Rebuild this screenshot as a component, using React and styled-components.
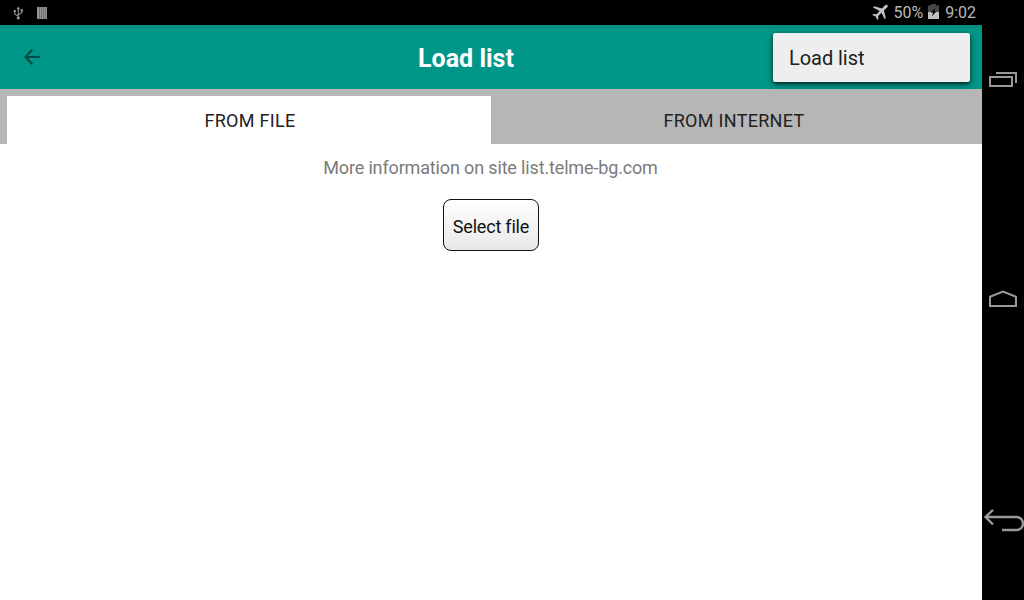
import React from 'react';
import styled, { createGlobalStyle } from 'styled-components';

const GlobalStyle = createGlobalStyle`
  * {
    box-sizing: border-box;
  }
  body {
    margin: 0;
    background: #fff;
    font-family: Roboto, sans-serif;
  }
`;

const Screen = styled.div`
  display: flex;
  width: 1024px;
  height: 600px;
  overflow: hidden;
`;

const Main = styled.div`
  display: flex;
  flex-direction: column;
  width: 982px;
  background: #fff;
`;

const StatusBar = styled.div`
  display: flex;
  align-items: center;
  justify-content: space-between;
  height: 25px;
  padding: 0 6px 0 12px;
  background: #000;
`;

const StatusGroup = styled.div`
  display: flex;
  align-items: center;
  height: 25px;
  gap: ${(props) => props.$gap}px;
`;

const StatusText = styled.span`
  color: #b8b8b8;
  font-size: 16px;
  line-height: 25px;
`;

const AppBar = styled.header`
  position: relative;
  display: flex;
  align-items: center;
  height: 64px;
  padding: 0 24px;
  background: linear-gradient(#008c7e 0, #009688 4px);
`;

const BackButton = styled.button`
  display: flex;
  width: 16px;
  padding: 0;
  border: 0;
  background: none;
`;

const Title = styled.h1`
  flex: 1;
  margin: 0 66px 0 0;
  padding-top: 3px;
  color: #fff;
  font-size: 25px;
  font-weight: 700;
  line-height: 30px;
  text-align: center;
`;

const Menu = styled.div`
  position: absolute;
  top: 8px;
  right: 12px;
  width: 197px;
  height: 49px;
  padding: 0 16px;
  border-radius: 2px;
  background: #eee;
  box-shadow: 0 2px 6px rgba(0, 0, 0, 0.6), 0 2px 2px rgba(0, 0, 0, 0.35);
  color: #212121;
  font-size: 20px;
  letter-spacing: -0.05px;
  line-height: 50px;
`;

const Tabs = styled.div`
  display: flex;
  height: 55px;
  padding: 7px 7px 0;
  background: #b6b6b6;
`;

const Tab = styled.div`
  flex: 1;
  padding-left: 2px;
  background: ${(props) => (props.$active ? '#fff' : 'transparent')};
  color: #212121;
  font-size: 18px;
  letter-spacing: 0.3px;
  line-height: 49px;
  text-align: center;
`;

const Content = styled.main`
  display: flex;
  flex-direction: column;
  align-items: center;
  padding-top: 12px;
`;

const Info = styled.p`
  margin: 0 0 19px;
  padding-right: 1px;
  color: #7b7b7b;
  font-size: 18px;
  letter-spacing: -0.15px;
  line-height: 24px;
`;

const SelectButton = styled.button`
  width: 96px;
  height: 52px;
  padding: 3px 0 0;
  border: 1px solid #111;
  border-radius: 8px;
  background: linear-gradient(#fff, #e8e8e8);
  color: #111;
  font-family: inherit;
  font-size: 18px;
  letter-spacing: -0.2px;
  white-space: nowrap;
`;

const NavBar = styled.nav`
  display: flex;
  flex-direction: column;
  justify-content: space-between;
  width: 42px;
  padding: 68px 0;
  background: #000;
`;

const Icon = styled.svg`
  display: block;
  flex: none;
  fill: none;
`;

function UsbIcon() {
  return (
    <Icon width="12" height="25" stroke="#929292" strokeWidth="1.1">
      <path d="M6.3 18V8M6.3 16.4L2.8 14V10.7M6.3 15L9.8 12.8V10.5" />
      <path d="M4.5 9.3L6.3 6.4L8.1 9.3Z" fill="#929292" stroke="none" />
      <circle cx="6.3" cy="18" r="1.6" fill="#929292" stroke="none" />
      <circle cx="2.8" cy="11" r="1.2" fill="#929292" stroke="none" />
      <path d="M8.6 9.2h2.4v2.4H8.6z" fill="#929292" stroke="none" />
    </Icon>
  );
}

function BarsIcon() {
  return (
    <Icon width="10" height="25">
      <path d="M0 7h10v12H0z" fill="#707070" />
      <path d="M0 7h2v12H0zM3 7h1v12H3zM5 7h1v12H5zM7 7h1v12H7zM9 7h1v12H9z" fill="#949494" />
    </Icon>
  );
}

function PlaneIcon() {
  return (
    <Icon width="16" height="25">
      <path
        d="M15.5 5.200C14.700 4.400 13.300 5 12.300 6L10 8.500L2.200 6.300L1 7.500L7.700 10.900L4.600 14.300L1.300 14L.3 15L3.700 16.600L5.300 19.900L6.400 18.800L6.200 16L9.500 12.800L12.700 19.200L13.800 18.100L11.900 10.500L14.400 8.100C15.400 7.100 16.200 6 15.500 5.200Z"
        fill="#c4c4c4"
      />
    </Icon>
  );
}

function BatteryIcon() {
  return (
    <Icon width="11" height="25">
      <path d="M0 5.500h3V4h5v1.500h3V12H0z" fill="#474747" />
      <path d="M0 12h11v7H0z" fill="#c0c0c0" />
      <path d="M7.500 7.800L2.800 12.700H5.200L3.700 16.500L8.400 11.500H6z" fill="#000" />
    </Icon>
  );
}

function BackArrow() {
  return (
    <Icon width="16" height="16" stroke="#004b43" strokeWidth="2">
      <path d="M8.300 .8L1.500 8L8.300 15.200M1.500 8H16" />
    </Icon>
  );
}

function RecentIcon() {
  return (
    <Icon width="42" height="24" stroke="#999" strokeWidth="2">
      <path d="M8 9h22v9H8zM14 5h20v10" />
    </Icon>
  );
}

function HomeIcon() {
  return (
    <Icon width="42" height="24" stroke="#999" strokeWidth="2">
      <path d="M8 18V8.700L21 3.500L34 8.700V18Z" />
    </Icon>
  );
}

function ReturnIcon() {
  return (
    <Icon width="42" height="24" stroke="#999" strokeWidth="2.400">
      <path d="M11 1.800L3.500 9L11 16.500M3.500 9H34.500A6.500 6.500 0 0 1 34.500 22H20" />
    </Icon>
  );
}

function App() {
  return (
    <Screen>
      <GlobalStyle />
      <Main>
        <StatusBar>
          <StatusGroup $gap={13}>
            <UsbIcon />
            <BarsIcon />
          </StatusGroup>
          <StatusGroup $gap={6}>
            <StatusGroup $gap={5}>
              <PlaneIcon />
              <StatusText>50%</StatusText>
              <BatteryIcon />
            </StatusGroup>
            <StatusText>9:02</StatusText>
          </StatusGroup>
        </StatusBar>
        <AppBar>
          <BackButton aria-label="Back">
            <BackArrow />
          </BackButton>
          <Title>Load list</Title>
          <Menu>Load list</Menu>
        </AppBar>
        <Tabs>
          <Tab $active>FROM FILE</Tab>
          <Tab>FROM INTERNET</Tab>
        </Tabs>
        <Content>
          <Info>More information on site list.telme-bg.com</Info>
          <SelectButton>Select file</SelectButton>
        </Content>
      </Main>
      <NavBar>
        <RecentIcon />
        <HomeIcon />
        <ReturnIcon />
      </NavBar>
    </Screen>
  );
}

export default App;
